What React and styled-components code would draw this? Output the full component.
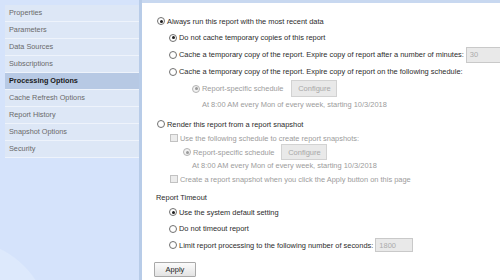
import styled, { createGlobalStyle } from "styled-components";

const GlobalStyle = createGlobalStyle`
  html, body {
    margin: 0;
    padding: 0;
    background: #fff;
  }
  body {
    font-family: "Liberation Sans", Arial, sans-serif;
  }
`;

const Page = styled.div`
  display: flex;
  width: 500px;
  height: 280px;
  overflow: hidden;
`;

const Sidebar = styled.nav`
  width: 134px;
  flex-shrink: 0;
  padding: 5px 0 0 5px;
  background: radial-gradient(circle at -40px 330px, #dde9fc 0, #dde9fc 90px, #d5e3fb 91px);
  border-right: 3px solid #b8cce8;
`;

const NavItem = styled.div`
  height: 16px;
  line-height: 16px;
  padding-left: 4px;
  font-size: 7.3px;
  color: ${(p) => (p.$active ? "#1a1a1a" : "#6a6a6a")};
  font-weight: ${(p) => (p.$active ? "bold" : "normal")};
  background: ${(p) => (p.$active ? "#b7c9e4" : "#dde7f6")};
  border-bottom: 1px solid #eef3fb;
  white-space: nowrap;
`;

const Main = styled.main`
  flex: 1;
  border-top: 3px solid #c8d8f0;
  padding: 10px 0 0 15px;
`;

const Row = styled.div`
  display: flex;
  align-items: center;
  height: ${(p) => p.$h || 17}px;
  margin-top: ${(p) => p.$mt || 0}px;
  padding-left: ${(p) => p.$indent || 0}px;
  font-size: 7.45px;
  color: ${(p) => (p.$disabled ? "#9c9c9c" : "#2c2c2c")};
  white-space: nowrap;
`;

const Label = styled.span`
  margin-left: 2px;
`;

const Radio = styled.span`
  position: relative;
  width: 6px;
  height: 6px;
  flex-shrink: 0;
  border: 1px solid ${(p) => (p.$disabled ? "#b4b4b4" : "#707070")};
  border-radius: 50%;
  background: ${(p) => (p.$disabled ? "#f2f2f2" : "#fff")};

  &::after {
    content: "";
    display: ${(p) => (p.$checked ? "block" : "none")};
    position: absolute;
    left: 1.5px;
    top: 1.5px;
    width: 3px;
    height: 3px;
    border-radius: 50%;
    background: ${(p) => (p.$disabled ? "#9a9a9a" : "#1e1e1e")};
  }
`;

const Checkbox = styled.span`
  width: 6px;
  height: 6px;
  flex-shrink: 0;
  border: 1px solid #c2c2c2;
  background: #ececec;
`;

const SmallButton = styled.span`
  display: flex;
  align-items: center;
  justify-content: center;
  width: 44px;
  height: ${(p) => p.$h || 14}px;
  margin-left: ${(p) => p.$ml || 8}px;
  border: 1px solid #d2d2d2;
  background: #e9e9e9;
  color: #a8a8a8;
  font-size: 7.5px;
`;

const NumberBox = styled.span`
  display: flex;
  align-items: center;
  width: ${(p) => p.$w}px;
  height: ${(p) => p.$h}px;
  margin-left: 2px;
  padding-left: 3px;
  border: 1px solid #c9c9c9;
  background: #e9e9e9;
  color: #ababab;
  font-size: 7.5px;
`;

const SectionTitle = styled.div`
  display: flex;
  align-items: center;
  height: 14px;
  margin-top: 4px;
  margin-left: -1px;
  font-size: 7.45px;
  color: #2c2c2c;
`;

const ApplyButton = styled.button`
  display: flex;
  align-items: center;
  justify-content: center;
  width: 42px;
  height: 15px;
  margin: 9px 0 0 -3px;
  padding: 0;
  border: 1px solid #a9a9a9;
  border-radius: 1px;
  background: linear-gradient(#fbfbfb, #e3e3e3);
  color: #222;
  font-family: "Liberation Sans", Arial, sans-serif;
  font-size: 7.5px;
`;

const navItems = [
  "Properties",
  "Parameters",
  "Data Sources",
  "Subscriptions",
  "Processing Options",
  "Cache Refresh Options",
  "Report History",
  "Snapshot Options",
  "Security",
];

const schedule = "At 8:00 AM every Mon of every week, starting 10/3/2018";

export default function App() {
  return (
    <>
      <GlobalStyle />
      <Page>
        <Sidebar>
          {navItems.map((item) => (
            <NavItem key={item} $active={item === "Processing Options"}>
              {item}
            </NavItem>
          ))}
        </Sidebar>
        <Main>
          <Row $h={16}>
            <Radio $checked />
            <Label>Always run this report with the most recent data</Label>
          </Row>
          <Row $indent={12}>
            <Radio $checked />
            <Label>Do not cache temporary copies of this report</Label>
          </Row>
          <Row $indent={12}>
            <Radio />
            <Label>
              Cache a temporary copy of the report. Expire copy of report after a number of minutes:
            </Label>
            <NumberBox $w={31} $h={14}>30</NumberBox>
          </Row>
          <Row $indent={12}>
            <Radio />
            <Label>
              Cache a temporary copy of the report. Expire copy of report on the following schedule:
            </Label>
          </Row>
          <Row $indent={35} $disabled>
            <Radio $checked $disabled />
            <Label>Report-specific schedule</Label>
            <SmallButton $h={15}>Configure</SmallButton>
          </Row>
          <Row $h={14} $indent={45} $disabled>
            {schedule}
          </Row>

          <Row $h={14} $mt={6}>
            <Radio />
            <Label>Render this report from a report snapshot</Label>
          </Row>
          <Row $h={14} $indent={13} $disabled>
            <Checkbox />
            <Label>Use the following schedule to create report snapshots:</Label>
          </Row>
          <Row $h={14} $indent={26} $disabled>
            <Radio $checked $disabled />
            <Label>Report-specific schedule</Label>
            <SmallButton $h={14} $ml={7}>Configure</SmallButton>
          </Row>
          <Row $h={13} $indent={35} $disabled>
            {schedule}
          </Row>
          <Row $h={14} $indent={13} $disabled>
            <Checkbox />
            <Label>
              Create a report snapshot when you click the Apply button on this page
            </Label>
          </Row>

          <SectionTitle>Report Timeout</SectionTitle>
          <Row $h={16} $indent={12}>
            <Radio $checked />
            <Label>Use the system default setting</Label>
          </Row>
          <Row $indent={12}>
            <Radio />
            <Label>Do not timeout report</Label>
          </Row>
          <Row $h={16} $indent={12}>
            <Radio />
            <Label>Limit report processing to the following number of seconds:</Label>
            <NumberBox $w={33} $h={12}>1800</NumberBox>
          </Row>
          <ApplyButton>Apply</ApplyButton>
        </Main>
      </Page>
    </>
  );
}
